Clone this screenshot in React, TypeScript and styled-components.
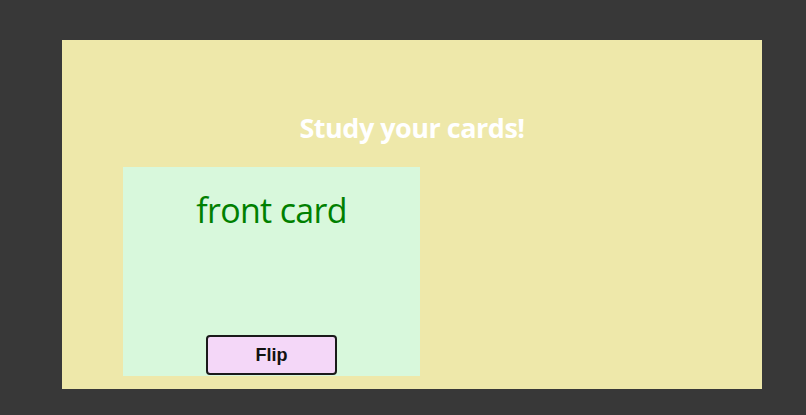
import React, { useState } from "react";
import styled, { createGlobalStyle } from "styled-components";

const Global = createGlobalStyle`
  html, body { margin: 0; padding: 0; background: #383838; }
  body { font-family: "Open Sans", "Noto Sans", sans-serif; }
`;

const Page = styled.div`
  width: 806px;
  height: 415px;
  padding: 40px 0 0 62px;
  box-sizing: border-box;
`;

const Panel = styled.main`
  width: 700px;
  height: 349px;
  background: #eee8aa;
  box-sizing: border-box;
  padding: 71px 0 0 61px;
  display: flex;
  flex-direction: column;
`;

const Title = styled.h1`
  margin: 0 0 22px -61px;
  width: 700px;
  text-align: center;
  color: #ffffff;
  font-family: "Open Sans", sans-serif;
  font-weight: 700;
  font-size: 27px;
  line-height: 34px;
  letter-spacing: -0.5px;
`;

const Card = styled.section`
  width: 297px;
  height: 209px;
  background: #d8f8dc;
  display: flex;
  flex-direction: column;
  align-items: center;
  justify-content: space-between;
  box-sizing: border-box;
  padding: 21px 0 0;
`;

const CardText = styled.div`
  color: #008000;
  font-family: "Open Sans", sans-serif;
  font-size: 34px;
  line-height: 44px;
  letter-spacing: -0.7px;
`;

const FlipButton = styled.button`
  width: 131px;
  height: 40px;
  margin-bottom: 1px;
  background: #f4d7f8;
  border: 2px solid #1a1a1a;
  border-radius: 4px;
  font-family: "Liberation Sans", Arial, sans-serif;
  font-weight: 700;
  font-size: 18px;
  color: #111;
  cursor: pointer;
`;

export default function App() {
  const [front, setFront] = useState(true);
  return (
    <>
      <Global />
      <Page>
        <Panel>
          <Title>Study your cards!</Title>
          <Card>
            <CardText>{front ? "front card" : "back card"}</CardText>
            <FlipButton onClick={() => setFront(!front)}>Flip</FlipButton>
          </Card>
        </Panel>
      </Page>
    </>
  );
}
